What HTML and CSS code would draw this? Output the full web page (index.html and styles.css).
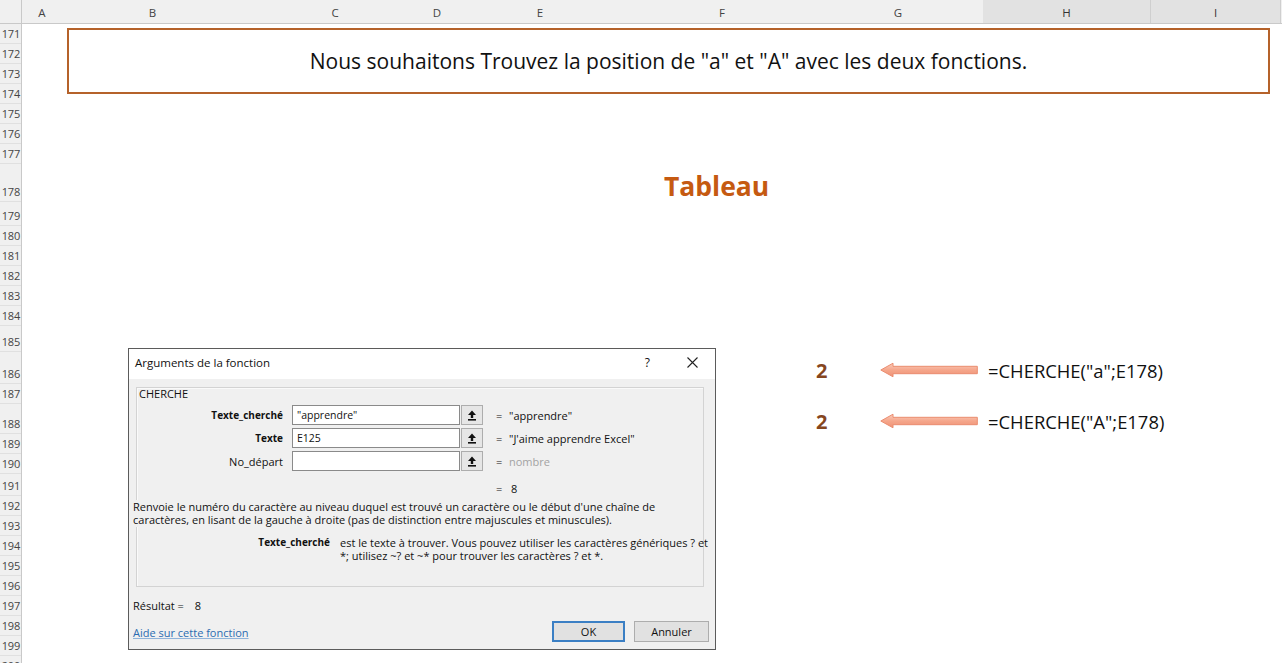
FILE: index.html
```html
<!DOCTYPE html>
<html lang="fr">
<head>
<meta charset="utf-8">
<title>CHERCHE</title>
<link rel="stylesheet" href="styles.css">
</head>
<body>
<div class="colhdr">
  <div class="corner"></div>
  <div class="ch">A</div>
  <div class="ch">B</div>
  <div class="ch ch-c">C</div>
  <div class="ch">D</div>
  <div class="ch ch-e">E</div>
  <div class="ch">F</div>
  <div class="ch">G</div>
  <div class="ch sel">H</div>
  <div class="ch sel">I</div>
  <div class="ch"></div>
</div>
<div class="main">
  <div class="rowhdr">
    <div class="rh h20">171</div>
    <div class="rh h20">172</div>
    <div class="rh h20">173</div>
    <div class="rh h20">174</div>
    <div class="rh h20">175</div>
    <div class="rh h20">176</div>
    <div class="rh h20">177</div>
    <div class="rh h38">178</div>
    <div class="rh h24">179</div>
    <div class="rh h20">180</div>
    <div class="rh h20">181</div>
    <div class="rh h20">182</div>
    <div class="rh h20">183</div>
    <div class="rh h20">184</div>
    <div class="rh h26">185</div>
    <div class="rh h32">186</div>
    <div class="rh h20">187</div>
    <div class="rh h30">188</div>
    <div class="rh h20">189</div>
    <div class="rh h20">190</div>
    <div class="rh h22">191</div>
    <div class="rh h20">192</div>
    <div class="rh h20">193</div>
    <div class="rh h20">194</div>
    <div class="rh h20">195</div>
    <div class="rh h20">196</div>
    <div class="rh h20">197</div>
    <div class="rh h20">198</div>
    <div class="rh h20">199</div>
    <div class="rh h20">200</div>
  </div>
  <div class="sheet">
    <div class="titlebox">Nous souhaitons Trouvez la position de "a" et "A" avec les deux fonctions.</div>
    <div class="tableau">Tableau</div>
    <div class="lower">
      <div class="dialog">
        <div class="dlg-title">
          <span class="dlg-name">Arguments de la fonction</span>
          <span class="dlg-q">?</span>
          <svg class="dlg-x" viewBox="0 0 11 11" width="11" height="11"><path d="M0.5 0.5 L10.5 10.5 M10.5 0.5 L0.5 10.5" stroke="#222" stroke-width="1.1" fill="none"/></svg>
        </div>
        <div class="dlg-body">
          <div class="grp">
            <div class="fname">CHERCHE</div>
            <div class="args">
              <div class="arg">
                <span class="lbl bold">Texte_cherché</span>
                <div class="inp">"apprendre"</div>
                <div class="refbtn"><svg viewBox="0 0 10 11" width="10" height="11"><path d="M5 0.5 L9 5 L6.2 5 L6.2 8 L3.8 8 L3.8 5 L1 5 Z" fill="#111"/><rect x="1" y="9" width="8" height="1.6" fill="#111"/></svg></div>
                <span class="eq">=</span>
                <span class="val">"apprendre"</span>
              </div>
              <div class="arg">
                <span class="lbl bold">Texte</span>
                <div class="inp">E125</div>
                <div class="refbtn"><svg viewBox="0 0 10 11" width="10" height="11"><path d="M5 0.5 L9 5 L6.2 5 L6.2 8 L3.8 8 L3.8 5 L1 5 Z" fill="#111"/><rect x="1" y="9" width="8" height="1.6" fill="#111"/></svg></div>
                <span class="eq">=</span>
                <span class="val">"J'aime apprendre Excel"</span>
              </div>
              <div class="arg">
                <span class="lbl">No_départ</span>
                <div class="inp"></div>
                <div class="refbtn"><svg viewBox="0 0 10 11" width="10" height="11"><path d="M5 0.5 L9 5 L6.2 5 L6.2 8 L3.8 8 L3.8 5 L1 5 Z" fill="#111"/><rect x="1" y="9" width="8" height="1.6" fill="#111"/></svg></div>
                <span class="eq">=</span>
                <span class="val dim">nombre</span>
              </div>
            </div>
            <div class="resline"><span class="eq">=</span><span class="val">8</span></div>
            <div class="desc">Renvoie le numéro du caractère au niveau duquel est trouvé un caractère ou le début d'une chaîne de<br>caractères, en lisant de la gauche à droite (pas de distinction entre majuscules et minuscules).</div>
            <div class="argdesc">
              <span class="adl">Texte_cherché</span>
              <span class="adt">est le texte à trouver. Vous pouvez utiliser les caractères génériques ? et<br>*; utilisez ~? et ~* pour trouver les caractères ? et *.</span>
            </div>
          </div>
          <div class="resultat">Résultat = <span class="resval">8</span></div>
          <div class="foot">
            <span class="help">Aide sur cette fonction</span>
            <div class="btns">
              <div class="btn ok">OK</div>
              <div class="btn">Annuler</div>
            </div>
          </div>
        </div>
      </div>
      <div class="results">
        <div class="res-row">
          <span class="num">2</span>
          <svg class="arrow" viewBox="0 0 98 16" width="98" height="16">
            <defs>
              <linearGradient id="ag" x1="0" y1="0" x2="0" y2="1">
                <stop offset="0" stop-color="#fbcdbd"/>
                <stop offset="0.5" stop-color="#f5a68b"/>
                <stop offset="1" stop-color="#ef9275"/>
              </linearGradient>
            </defs>
            <path d="M0.8 8 L13 1.2 L13 4.3 L97.3 4.3 L97.3 11.7 L13 11.7 L13 14.8 Z" fill="url(#ag)" stroke="#ea8c6f" stroke-width="1"/>
          </svg>
          <span class="formula">=CHERCHE("a";E178)</span>
        </div>
        <div class="res-row">
          <span class="num">2</span>
          <svg class="arrow" viewBox="0 0 98 16" width="98" height="16">
            <path d="M0.8 8 L13 1.2 L13 4.3 L97.3 4.3 L97.3 11.7 L13 11.7 L13 14.8 Z" fill="url(#ag)" stroke="#ea8c6f" stroke-width="1"/>
          </svg>
          <span class="formula">=CHERCHE("A";E178)</span>
        </div>
      </div>
    </div>
  </div>
</div>
</body>
</html>
```
FILE: styles.css
```css
html, body {
  margin: 0;
  padding: 0;
}
body {
  width: 1282px;
  height: 663px;
  overflow: hidden;
  background: #ffffff;
  font-family: "Open Sans", "Noto Sans", sans-serif;
  color: #111;
}

/* column header */
.colhdr {
  display: grid;
  grid-template-columns: 22px 40px 181px 143px 102px 143px 182px 170px 168px 130px 1fr;
  height: 24px;
  box-sizing: border-box;
  background: #f0f0f0;
  border-bottom: 1px solid #c9c9c9;
}
.corner {
  border-right: 1px solid #c9c9c9;
}
.ch {
  display: flex;
  align-items: center;
  justify-content: center;
  font-size: 11.5px;
  color: #444;
  padding-top: 2px;
}
.ch-c {
  padding-left: 41px;
}
.ch-e {
  padding-right: 39px;
}
.sel {
  background: #e2e2e2;
  color: #333;
  border-right: 1px solid #cfcfcf;
}

/* main */
.main {
  display: flex;
}
.rowhdr {
  width: 22px;
  flex: none;
  box-sizing: border-box;
  background: #f0f0f0;
  border-right: 1px solid #c9c9c9;
}
.rh {
  display: flex;
  align-items: flex-end;
  justify-content: flex-end;
  box-sizing: border-box;
  border-bottom: 1px solid #e0e0e0;
  font-size: 11px;
  line-height: 19px;
  color: #444;
  padding-right: 1px;
  letter-spacing: -0.2px;
}
.h20 { height: 20px; }
.h22 { height: 22px; }
.h24 { height: 24px; }
.h26 { height: 26px; }
.h30 { height: 30px; }
.h32 { height: 32px; }
.h38 { height: 38px; }

.sheet {
  flex: 1;
  display: flex;
  flex-direction: column;
  align-items: flex-start;
}
.titlebox {
  margin: 4px 0 0 45px;
  width: 1203px;
  height: 66px;
  box-sizing: border-box;
  border: 2px solid #b5622a;
  display: flex;
  align-items: center;
  justify-content: center;
  font-size: 21px;
  color: #111;
}
.tableau {
  margin: 77px 0 0 642px;
  font-size: 26.5px;
  line-height: 30px;
  font-weight: 700;
  color: #c55a11;
}
.lower {
  display: flex;
  align-items: flex-start;
  margin: 147px 0 0 106px;
}

/* dialog */
.dialog {
  width: 588px;
  box-sizing: border-box;
  border: 1px solid #5b5b5b;
  background: #f0f0f0;
  font-size: 11px;
  color: #111;
}
.dlg-title {
  height: 30px;
  box-sizing: border-box;
  background: #ffffff;
  display: flex;
  align-items: center;
  padding: 0 17px 4px 6px;
  font-size: 11.5px;
}
.dlg-name {
  flex: 1;
}
.dlg-q {
  font-size: 12px;
  margin-right: 37px;
}
.dlg-body {
  padding: 8px 11px 7px 4px;
}
.grp {
  margin-left: 3px;
  height: 200px;
  box-sizing: border-box;
  border: 1px solid #d3d3d3;
  box-shadow: inset 1px 1px 0 #fafafa;
  display: flex;
  flex-direction: column;
}
.fname {
  line-height: 12px;
  padding-left: 2px;
}
.args {
  margin-top: 5px;
  display: flex;
  flex-direction: column;
  gap: 3px;
}
.arg {
  display: flex;
  align-items: center;
  height: 20px;
}
.lbl {
  width: 146px;
  text-align: right;
  margin-right: 9px;
}
.bold {
  font-weight: 700;
  font-size: 10px;
}
.inp {
  width: 168px;
  height: 20px;
  box-sizing: border-box;
  background: #fff;
  border: 1px solid #8a8a8a;
  padding-left: 4px;
  line-height: 18px;
  font-size: 10.5px;
}
.refbtn {
  width: 22px;
  height: 20px;
  margin-left: 1px;
  box-sizing: border-box;
  border: 1px solid #adadad;
  background: #e6e6e6;
  display: flex;
  align-items: center;
  justify-content: center;
}
.eq {
  margin-left: 13px;
  width: 6px;
}
.val {
  margin-left: 7px;
}
.dim {
  color: #a3a3a3;
}
.resline {
  margin-top: 11px;
  display: flex;
  line-height: 14px;
  padding-left: 346px;
}
.resline .val {
  margin-left: 9px;
}
.desc {
  margin: 4px 0 0 -4px;
  line-height: 13px;
  background: #f0f0f0;
  padding-bottom: 1px;
}
.argdesc {
  margin-top: 9px;
  display: flex;
  line-height: 13px;
}
.adl {
  width: 193px;
  text-align: right;
  font-weight: 700;
  font-size: 10px;
  flex: none;
}
.adt {
  margin-left: 10px;
  flex: none;
  white-space: nowrap;
}
.resultat {
  margin-top: 12px;
  line-height: 14px;
}
.resval {
  margin-left: 8px;
}
.foot {
  margin: 8px -5px 0 0;
  display: flex;
  align-items: center;
  justify-content: space-between;
  height: 21px;
}
.help {
  color: #2b6cb0;
  text-decoration: underline;
  text-decoration-color: #8fb3da;
  margin-top: 2px;
}
.btns {
  display: flex;
  gap: 9px;
}
.btn {
  width: 75px;
  height: 21px;
  box-sizing: border-box;
  border: 1px solid #adadad;
  background: #e1e1e1;
  display: flex;
  align-items: center;
  justify-content: center;
  font-size: 11px;
}
.ok {
  width: 73px;
  border: 2px solid #3b7fc4;
}

/* results */
.results {
  margin: 10px 0 0 100px;
  display: flex;
  flex-direction: column;
  gap: 27px;
}
.res-row {
  display: flex;
  align-items: center;
  height: 24px;
}
.num {
  width: 64px;
  font-size: 20px;
  font-weight: 700;
  color: #86461e;
}
.arrow {
  margin-right: 10px;
  flex: none;
}
.formula {
  font-size: 18.4px;
  color: #111;
}
```
